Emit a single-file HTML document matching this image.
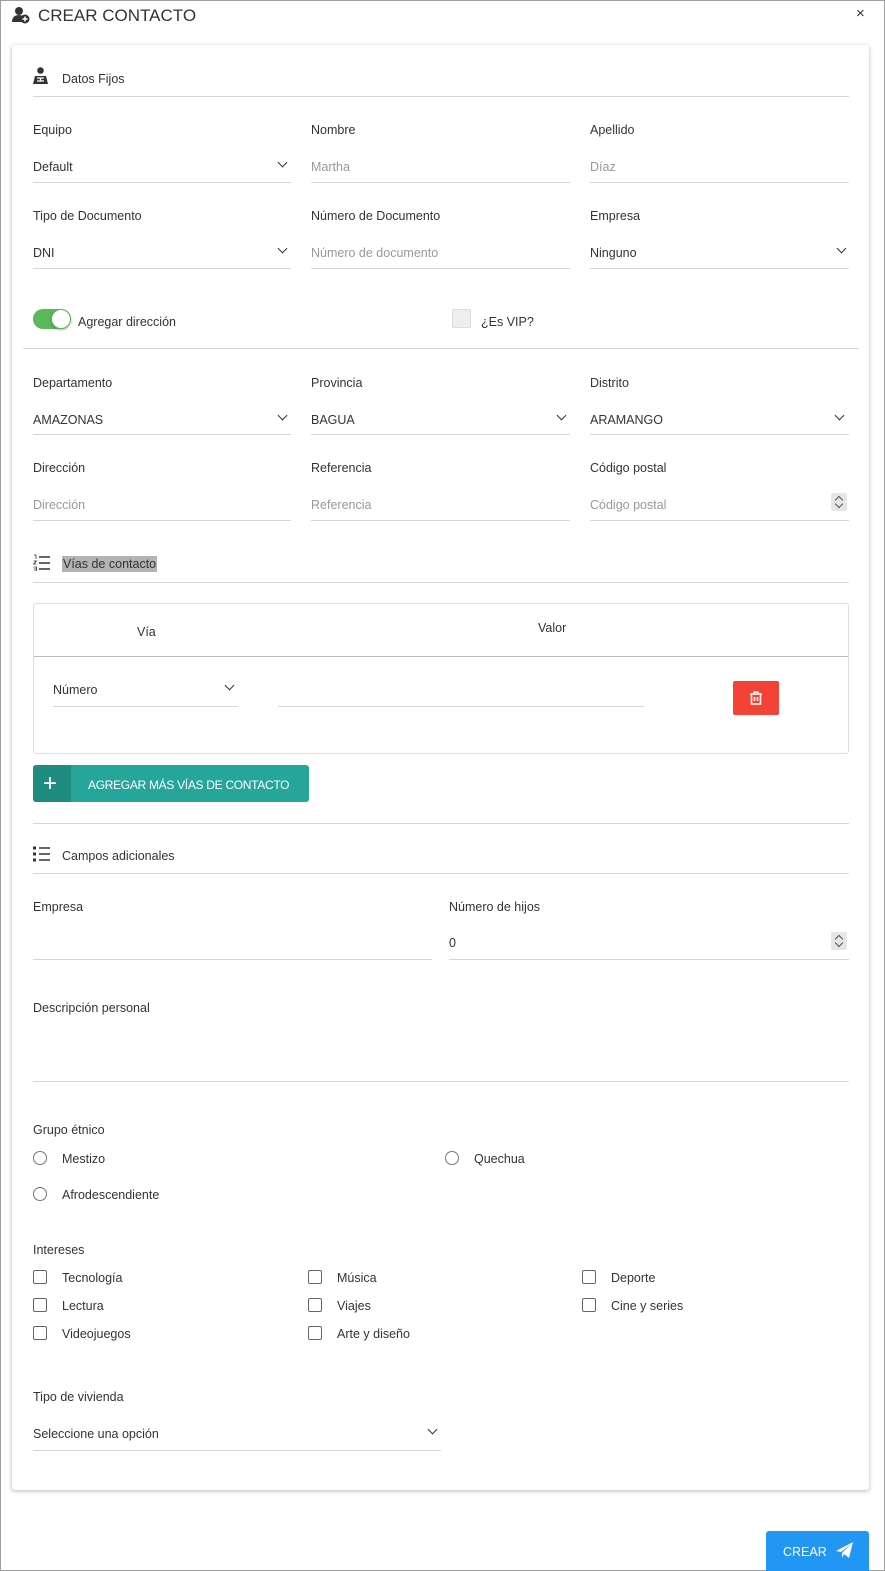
<!DOCTYPE html>
<html><head><meta charset="utf-8"><style>
*{box-sizing:border-box;margin:0;padding:0}
body{width:885px;height:1571px;position:relative;background:#fff;font-family:"Liberation Sans",sans-serif;font-size:12.5px;color:#333;overflow:hidden}
.frame{position:absolute;left:0;top:0;width:885px;height:1571px;border:1px solid #9e9e9e}
.card{position:absolute;left:12px;top:45px;width:857px;height:1445px;background:#fff;border-radius:3px;box-shadow:0 1px 4px rgba(0,0,0,.3)}
.t{position:absolute;line-height:16px;white-space:nowrap;margin-top:2px}
.ph{color:#999}
.ln{position:absolute;height:1px;background:#d6d6d6}
.chev{position:absolute;width:7px;height:7px;border-right:1.5px solid #333;border-bottom:1.5px solid #333;transform:rotate(45deg)}
.cb{position:absolute;width:14px;height:14px;border:1.5px solid #666;border-radius:2px}
.rd{position:absolute;width:14px;height:14px;border:1px solid #777;border-radius:50%}
.spin{position:absolute;width:16px;height:18px;background:#e6e6e6;border-radius:2px}
.spin:before,.spin:after{content:"";position:absolute;left:5px;width:5px;height:5px;border-left:1px solid #555;border-top:1px solid #555}
.spin:before{top:4px;transform:rotate(45deg)}
.spin:after{top:8px;transform:rotate(225deg)}
</style></head><body>
<div class="frame"></div>
<svg style="position:absolute;left:12px;top:6px" width="18" height="18" viewBox="0 0 18 18"><circle cx="7" cy="5" r="4" fill="#333"/><path d="M0 16c0-5 3-7 7-7 2 0 3 .5 4 1v6z" fill="#333"/><circle cx="13" cy="13" r="4.5" fill="#333"/><path d="M13 10.5v5M10.5 13h5" stroke="#fff" stroke-width="1.5"/></svg>
<div class="t" style="left:38px;top:4px;font-size:17px;line-height:20px;color:#333">CREAR CONTACTO</div>
<div class="t" style="left:856px;top:4px;font-size:15px">×</div>
<div class="card"></div>
<svg style="position:absolute;left:32px;top:67px" width="17" height="18" viewBox="0 0 17 18"><circle cx="8.5" cy="3.5" r="3.3" fill="#333"/><path d="M1 17l2-8h11l2 8z" fill="#333"/><path d="M5 11h7M5 14h7M8.5 11v3" stroke="#fff" stroke-width="1.3"/></svg>
<div class="t" style="left:62px;top:69px">Datos Fijos</div>
<div class="ln" style="left:33px;top:96px;width:816px"></div>

<div class="t" style="left:33px;top:120px">Equipo</div>
<div class="t" style="left:311px;top:120px">Nombre</div>
<div class="t" style="left:590px;top:120px">Apellido</div>
<div class="t" style="left:33px;top:157px">Default</div><div class="chev" style="left:279px;top:159px"></div>
<div class="t ph" style="left:311px;top:157px">Martha</div>
<div class="t ph" style="left:590px;top:157px">Díaz</div>
<div class="ln" style="left:33px;top:182px;width:258px"></div><div class="ln" style="left:311px;top:182px;width:259px"></div><div class="ln" style="left:590px;top:182px;width:259px"></div>

<div class="t" style="left:33px;top:206px">Tipo de Documento</div>
<div class="t" style="left:311px;top:206px">Número de Documento</div>
<div class="t" style="left:590px;top:206px">Empresa</div>
<div class="t" style="left:33px;top:243px">DNI</div><div class="chev" style="left:279px;top:245px"></div>
<div class="t ph" style="left:311px;top:243px">Número de documento</div>
<div class="t" style="left:590px;top:243px">Ninguno</div><div class="chev" style="left:838px;top:245px"></div>
<div class="ln" style="left:33px;top:268px;width:258px"></div><div class="ln" style="left:311px;top:268px;width:259px"></div><div class="ln" style="left:590px;top:268px;width:259px"></div>

<div style="position:absolute;left:33px;top:309px;width:38px;height:20px;border-radius:10px;background:#5cb85c"></div>
<div style="position:absolute;left:51px;top:309px;width:20px;height:20px;border-radius:50%;background:#fff;border:1px solid #5cb85c;box-shadow:0 1px 2px rgba(0,0,0,.3)"></div>
<div class="t" style="left:78px;top:312px">Agregar dirección</div>
<div style="position:absolute;left:452px;top:309px;width:19px;height:19px;background:#eee;border:1px solid #ddd;border-radius:2px"></div>
<div class="t" style="left:481px;top:312px">¿Es VIP?</div>
<div class="ln" style="left:23px;top:348px;width:836px"></div>

<div class="t" style="left:33px;top:373px">Departamento</div>
<div class="t" style="left:311px;top:373px">Provincia</div>
<div class="t" style="left:590px;top:373px">Distrito</div>
<div class="t" style="left:33px;top:410px">AMAZONAS</div><div class="chev" style="left:279px;top:412px"></div>
<div class="t" style="left:311px;top:410px">BAGUA</div><div class="chev" style="left:558px;top:412px"></div>
<div class="t" style="left:590px;top:410px">ARAMANGO</div><div class="chev" style="left:836px;top:412px"></div>
<div class="ln" style="left:33px;top:434px;width:258px"></div><div class="ln" style="left:311px;top:434px;width:259px"></div><div class="ln" style="left:590px;top:434px;width:259px"></div>

<div class="t" style="left:33px;top:458px">Dirección</div>
<div class="t" style="left:311px;top:458px">Referencia</div>
<div class="t" style="left:590px;top:458px">Código postal</div>
<div class="t ph" style="left:33px;top:495px">Dirección</div>
<div class="t ph" style="left:311px;top:495px">Referencia</div>
<div class="t ph" style="left:590px;top:495px">Código postal</div>
<div class="spin" style="left:831px;top:493px"></div>
<div class="ln" style="left:33px;top:520px;width:258px"></div><div class="ln" style="left:311px;top:520px;width:259px"></div><div class="ln" style="left:590px;top:520px;width:259px"></div>

<svg style="position:absolute;left:33px;top:554px" width="17" height="17" viewBox="0 0 17 17"><path d="M6 3h11M6 9h11M6 15h11" stroke="#333" stroke-width="1.6"/><path d="M1 1h2v4M0.5 7h3l-3 3h3M0.5 13h3v4h-3M1 15h2" stroke="#333" stroke-width=".8" fill="none"/></svg>
<div class="t" style="left:62px;top:554px;background:#b3b3b3;padding:0 1px">Vías de contacto</div>
<div class="ln" style="left:33px;top:582px;width:816px"></div>

<div style="position:absolute;left:33px;top:603px;width:816px;height:151px;border:1px solid #ddd;border-radius:3px"></div>
<div class="t" style="left:137px;top:622px">Vía</div>
<div class="t" style="left:538px;top:618px">Valor</div>
<div class="ln" style="left:34px;top:656px;width:814px;background:#bbb"></div>
<div class="t" style="left:53px;top:680px">Número</div><div class="chev" style="left:226px;top:682px"></div>
<div class="ln" style="left:53px;top:706px;width:185px"></div>
<div class="ln" style="left:278px;top:706px;width:366px"></div>
<div style="position:absolute;left:733px;top:681px;width:46px;height:34px;background:#f44336;border-radius:2px"></div>
<svg style="position:absolute;left:748px;top:690px" width="16" height="16" viewBox="0 0 16 16"><path d="M2 4h12M6 4V2h4v2M3.5 4v10h9V4" stroke="#fff" stroke-width="1.6" fill="none"/><path d="M6.5 7v4M9.5 7v4" stroke="#fff" stroke-width="1.6"/></svg>

<div style="position:absolute;left:33px;top:765px;width:276px;height:37px;background:#26a69a;border-radius:3px;overflow:hidden"><div style="width:38px;height:37px;background:#1f8c82"></div></div>
<div class="t" style="left:43px;top:769px;color:#fff;font-size:24px;line-height:26px">+</div>
<div class="t" style="left:88px;top:775px;color:#fff;font-size:12px;letter-spacing:-0.3px">AGREGAR MÁS VÍAS DE CONTACTO</div>
<div class="ln" style="left:33px;top:823px;width:816px"></div>

<svg style="position:absolute;left:33px;top:846px" width="17" height="16" viewBox="0 0 17 16"><path d="M0 2h3M0 8h3M0 14h3" stroke="#333" stroke-width="3"/><path d="M6 2h11M6 8h11M6 14h11" stroke="#333" stroke-width="1.6"/></svg>
<div class="t" style="left:62px;top:846px">Campos adicionales</div>
<div class="ln" style="left:33px;top:873px;width:816px"></div>

<div class="t" style="left:33px;top:897px">Empresa</div>
<div class="t" style="left:449px;top:897px">Número de hijos</div>
<div class="t" style="left:449px;top:933px">0</div>
<div class="spin" style="left:831px;top:932px"></div>
<div class="ln" style="left:33px;top:959px;width:399px"></div><div class="ln" style="left:449px;top:959px;width:400px"></div>

<div class="t" style="left:33px;top:998px">Descripción personal</div>
<div class="ln" style="left:33px;top:1081px;width:816px"></div>

<div class="t" style="left:33px;top:1120px">Grupo étnico</div>
<div class="rd" style="left:33px;top:1151px"></div><div class="t" style="left:62px;top:1149px">Mestizo</div>
<div class="rd" style="left:445px;top:1151px"></div><div class="t" style="left:474px;top:1149px">Quechua</div>
<div class="rd" style="left:33px;top:1187px"></div><div class="t" style="left:62px;top:1185px">Afrodescendiente</div>

<div class="t" style="left:33px;top:1240px">Intereses</div>
<div class="cb" style="left:33px;top:1270px"></div><div class="t" style="left:62px;top:1268px">Tecnología</div>
<div class="cb" style="left:308px;top:1270px"></div><div class="t" style="left:337px;top:1268px">Música</div>
<div class="cb" style="left:582px;top:1270px"></div><div class="t" style="left:611px;top:1268px">Deporte</div>
<div class="cb" style="left:33px;top:1298px"></div><div class="t" style="left:62px;top:1296px">Lectura</div>
<div class="cb" style="left:308px;top:1298px"></div><div class="t" style="left:337px;top:1296px">Viajes</div>
<div class="cb" style="left:582px;top:1298px"></div><div class="t" style="left:611px;top:1296px">Cine y series</div>
<div class="cb" style="left:33px;top:1326px"></div><div class="t" style="left:62px;top:1324px">Videojuegos</div>
<div class="cb" style="left:308px;top:1326px"></div><div class="t" style="left:337px;top:1324px">Arte y diseño</div>

<div class="t" style="left:33px;top:1387px">Tipo de vivienda</div>
<div class="t" style="left:33px;top:1424px">Seleccione una opción</div><div class="chev" style="left:429px;top:1426px"></div>
<div class="ln" style="left:33px;top:1450px;width:408px"></div>

<div style="position:absolute;left:766px;top:1531px;width:103px;height:40px;background:#2196f3;border-radius:3px 3px 0 0"></div>
<div class="t" style="left:783px;top:1542px;color:#fff">CREAR</div>
<svg style="position:absolute;left:836px;top:1542px" width="17" height="17" viewBox="0 0 17 17"><path d="M0 9L17 0L13 16L8 12L6 16V11L15 2L5 10z" fill="#fff"/></svg>
</body></html>
